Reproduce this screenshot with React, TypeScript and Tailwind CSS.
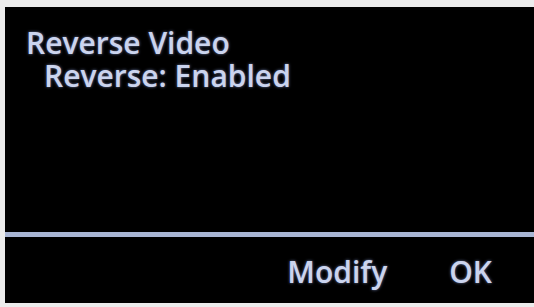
export default function App() {
  return (
    <div className="flex h-[307px] w-[534px] flex-col bg-[#ececec] pl-[5px] pt-[7px] pb-[4px]">
      <div
        className="flex flex-1 flex-col bg-black text-[#cbd4ee] [text-shadow:0_0_3px_rgba(150,170,230,0.7)]"
        style={{ fontFamily: '"Open Sans", "Lato", sans-serif' }}
      >
        <div className="flex flex-1 flex-col pl-[21px] pt-[19px] text-[30px] font-semibold leading-[33px]">
          <div>Reverse Video</div>
          <div className="pl-[18px]">Reverse: Enabled</div>
        </div>
        <div className="h-[5px] bg-[#a9b6d4]" />
        <div className="flex h-[66px] items-center justify-end gap-[62px] pr-[42px] pt-[2px] text-[30px] font-semibold">
          <span>Modify</span>
          <span>OK</span>
        </div>
      </div>
    </div>
  )
}
